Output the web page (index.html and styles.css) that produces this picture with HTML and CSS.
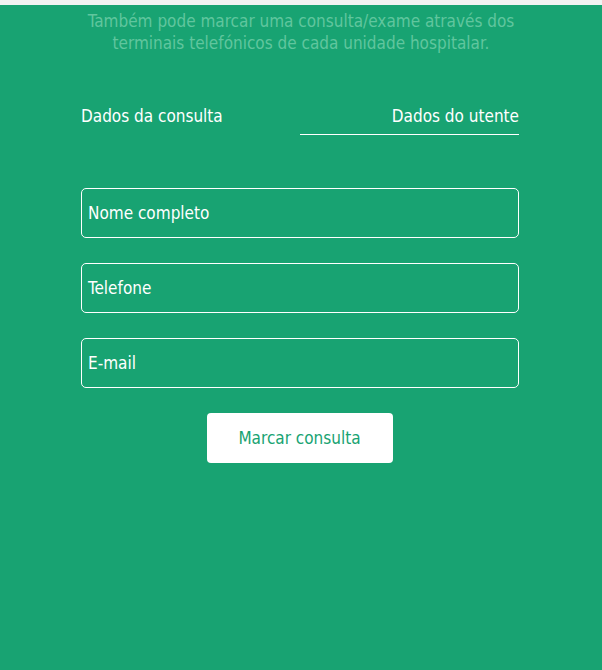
FILE: index.html
```html
<!DOCTYPE html>
<html lang="pt">
<head>
<meta charset="utf-8">
<title>Marcar consulta</title>
<link rel="stylesheet" href="styles.css">
</head>
<body>
<div class="topstrip"></div>
<section class="panel">
  <p class="intro">Também pode marcar uma consulta/exame através dos<br>terminais telefónicos de cada unidade hospitalar.</p>
  <div class="form">
    <div class="tabs">
      <div class="tab">Dados da consulta</div>
      <div class="tab active">Dados do utente</div>
    </div>
    <div class="fields">
      <div class="field">Nome completo</div>
      <div class="field">Telefone</div>
      <div class="field">E-mail</div>
    </div>
    <div class="actions">
      <button class="btn">Marcar consulta</button>
    </div>
  </div>
</section>
</body>
</html>
```
FILE: styles.css
```css
html, body {
  margin: 0;
  padding: 0;
  height: 100%;
}
body {
  background: #18a372;
  font-family: "DejaVu Sans Condensed", "DejaVu Sans", Verdana, sans-serif;
  font-size: 17px;
  overflow: hidden;
}
.topstrip {
  height: 5px;
  background: #f1f3f2;
}
.panel {
  padding-top: 5px;
}
.intro {
  margin: 0;
  text-align: center;
  color: #60c69e;
  line-height: 22px;
}
.form {
  margin: 0 83px 0 81px;
  padding-top: 52px;
}
.tabs {
  display: flex;
  justify-content: space-between;
  color: #fff;
  line-height: 21px;
}
.tab {
  width: 219px;
  padding-bottom: 7px;
  border-bottom: 1px solid transparent;
}
.tab.active {
  text-align: right;
  border-bottom-color: #fff;
}
.fields {
  margin-top: 53px;
  display: flex;
  flex-direction: column;
  gap: 25px;
}
.field {
  height: 48px;
  border: 1px solid #fff;
  border-radius: 5px;
  color: #fff;
  padding-left: 6px;
  display: flex;
  align-items: center;
}
.actions {
  display: flex;
  justify-content: center;
  margin-top: 25px;
}
.btn {
  width: 186px;
  height: 50px;
  background: #fff;
  border: none;
  border-radius: 4px;
  color: #18a372;
  font-family: inherit;
  font-size: 17px;
  margin-right: 1px;
  padding: 0;
}
```
